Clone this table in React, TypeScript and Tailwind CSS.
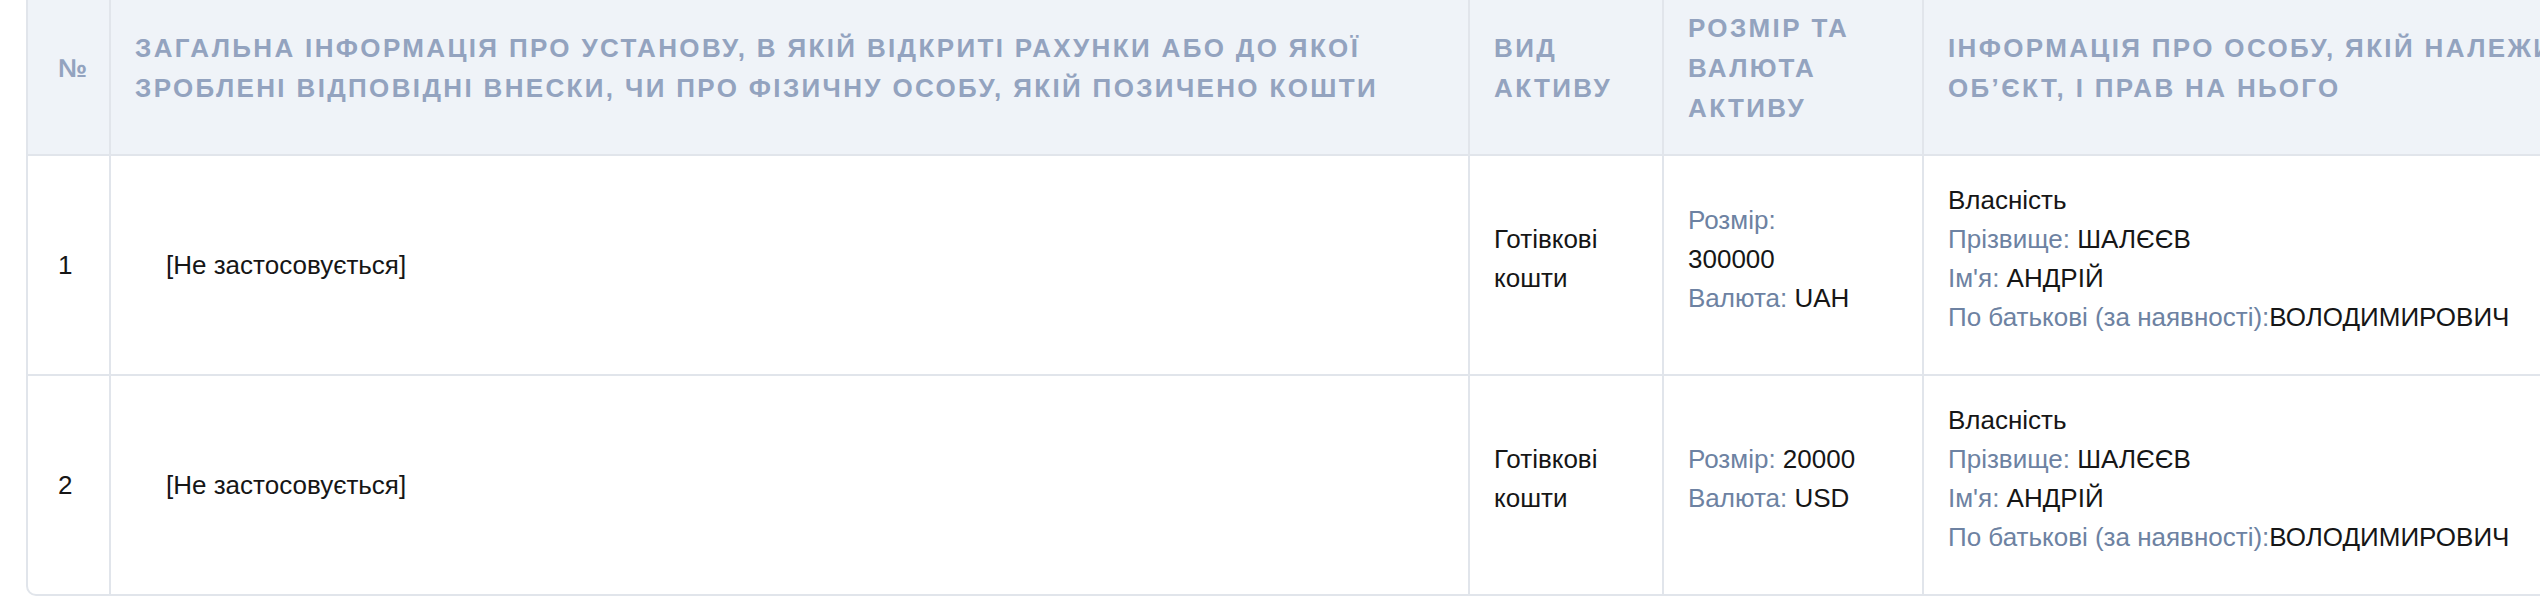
import React from 'react'

type Row = {
  n: number
  institution: string
  assetType: string
  size: string
  currency: string
  ownership: string
  lastName: string
  firstName: string
  middleName: string
}

const ROWS: Row[] = [
  {
    n: 1,
    institution: '[Не застосовується]',
    assetType: 'Готівкові кошти',
    size: '300000',
    currency: 'UAH',
    ownership: 'Власність',
    lastName: 'ШАЛЄЄВ',
    firstName: 'АНДРІЙ',
    middleName: 'ВОЛОДИМИРОВИЧ',
  },
  {
    n: 2,
    institution: '[Не застосовується]',
    assetType: 'Готівкові кошти',
    size: '20000',
    currency: 'USD',
    ownership: 'Власність',
    lastName: 'ШАЛЄЄВ',
    firstName: 'АНДРІЙ',
    middleName: 'ВОЛОДИМИРОВИЧ',
  },
]

const HEADERS = [
  '№',
  'Загальна інформація про установу, в якій відкриті рахунки або до якої зроблені відповідні внески, чи про фізичну особу, якій позичено кошти',
  'Вид активу',
  'Розмір та валюта активу',
  'Інформація про особу, якій належить об’єкт, і прав на нього',
]

const th =
  'flex items-center bg-[#eff3f8] border-r-2 border-b-2 border-[#e1e5eb] py-[26px] px-[24px] text-[26px] leading-[40px] font-bold uppercase tracking-[2.35px] text-[#93a3bf]'
const td =
  'flex items-center border-r-2 border-[#e1e5eb] py-[25px] px-[24px] text-[26px] leading-[39px] text-[#161616]'

function Label({ children }: { children: React.ReactNode }) {
  return <span className="text-[#6d82a2]">{children}</span>
}

export default function App() {
  return (
    <div className="w-[2540px] h-[600px] overflow-hidden bg-white font-['Liberation_Sans',Arial,sans-serif]">
      <div className="ml-[26px] -mt-[20px] w-[2700px] border-2 border-[#e1e5eb] rounded-[10px] overflow-hidden">
        <div className="grid grid-cols-[83px_1359px_194px_260px_800px]">
          {HEADERS.map((h, i) => (
            <div key={i} className={`${th} ${i === 0 ? 'pl-[30px] pr-[10px] normal-case tracking-normal' : ''}`}>
              {h}
            </div>
          ))}

          {ROWS.map((r, idx) => {
            const last = idx === ROWS.length - 1
            const rowBorder = last ? '' : 'border-b-2'
            return (
              <React.Fragment key={r.n}>
                <div className={`${td} ${rowBorder} pl-[30px] pr-[10px]`}>{r.n}</div>
                <div className={`${td} ${rowBorder} pl-[55px]`}>{r.institution}</div>
                <div className={`${td} ${rowBorder}`}>
                  <div className="pb-[12px]">{r.assetType}</div>
                </div>
                <div className={`${td} ${rowBorder}`}>
                  <div className="pb-[12px] w-[174px]">
                    <div>
                      <Label>Розмір:</Label> {r.size}
                    </div>
                    <div>
                      <Label>Валюта:</Label> {r.currency}
                    </div>
                  </div>
                </div>
                <div className={`${td} ${rowBorder}`}>
                  <div className="pb-[12px] whitespace-nowrap">
                    <div>{r.ownership}</div>
                    <div>
                      <Label>Прізвище:</Label> {r.lastName}
                    </div>
                    <div>
                      <Label>Ім'я:</Label> {r.firstName}
                    </div>
                    <div>
                      <Label>По батькові (за наявності):</Label>
                      {r.middleName}
                    </div>
                  </div>
                </div>
              </React.Fragment>
            )
          })}
        </div>
      </div>
    </div>
  )
}
